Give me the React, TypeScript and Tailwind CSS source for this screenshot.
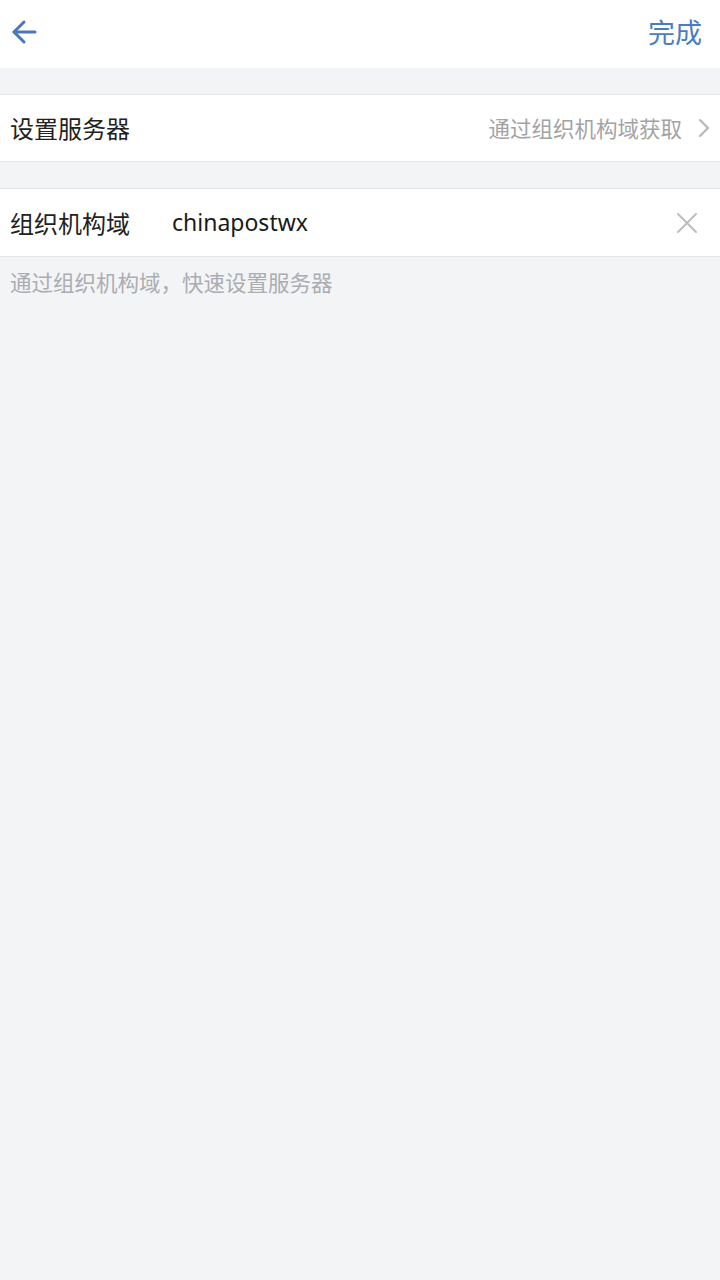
const font = { fontFamily: '"Noto Sans CJK SC", "Noto Sans", sans-serif' }

export default function App() {
  return (
    <div className="w-[720px] h-[1280px] bg-[#f3f4f6] flex flex-col" style={font}>
      {/* header */}
      <div className="h-[68px] bg-white flex items-center justify-between pl-[11px] pr-[18px] pb-[5px]">
        <svg width="26" height="26" viewBox="0 0 26 26" fill="none" stroke="#4a78b6" strokeWidth="3" strokeLinecap="round" strokeLinejoin="round">
          <path d="M24 13H3" />
          <path d="M13 3L3 13l10 10" />
        </svg>
        <span className="text-[27px] leading-none text-[#4a7cc0]">完成</span>
      </div>

      {/* server row */}
      <div className="mt-[26px] h-[68px] bg-white border-y border-[#e3e4e6] flex items-center justify-between pl-[10px] pr-[10px]">
        <span className="text-[24px] text-[#222]">设置服务器</span>
        <div className="flex items-center gap-[16px]">
          <span className="text-[21.5px] text-[#a3a3a3]">通过组织机构域获取</span>
          <svg width="12" height="20" viewBox="0 0 12 20" fill="none" stroke="#b5b5b5" strokeWidth="2" strokeLinecap="round" strokeLinejoin="round">
            <path d="M2 2l8 8-8 8" />
          </svg>
        </div>
      </div>

      {/* domain row */}
      <div className="mt-[26px] h-[69px] bg-white border-y border-[#e3e4e6] flex items-center pl-[10px] pr-[22px]">
        <span className="text-[24px] text-[#222] w-[162px]">组织机构域</span>
        <span className="flex-1 text-[23px] text-[#1a1a1a]" style={{ fontFamily: '"Noto Sans", sans-serif' }}>chinapostwx</span>
        <svg width="22" height="22" viewBox="0 0 22 22" fill="none" stroke="#bdbdbd" strokeWidth="2" strokeLinecap="round">
          <path d="M2 2l18 18M20 2L2 20" />
        </svg>
      </div>

      <p className="pl-[10px] pt-[9px] text-[21.5px] text-[#aaadb2]">通过组织机构域，快速设置服务器</p>
    </div>
  )
}
